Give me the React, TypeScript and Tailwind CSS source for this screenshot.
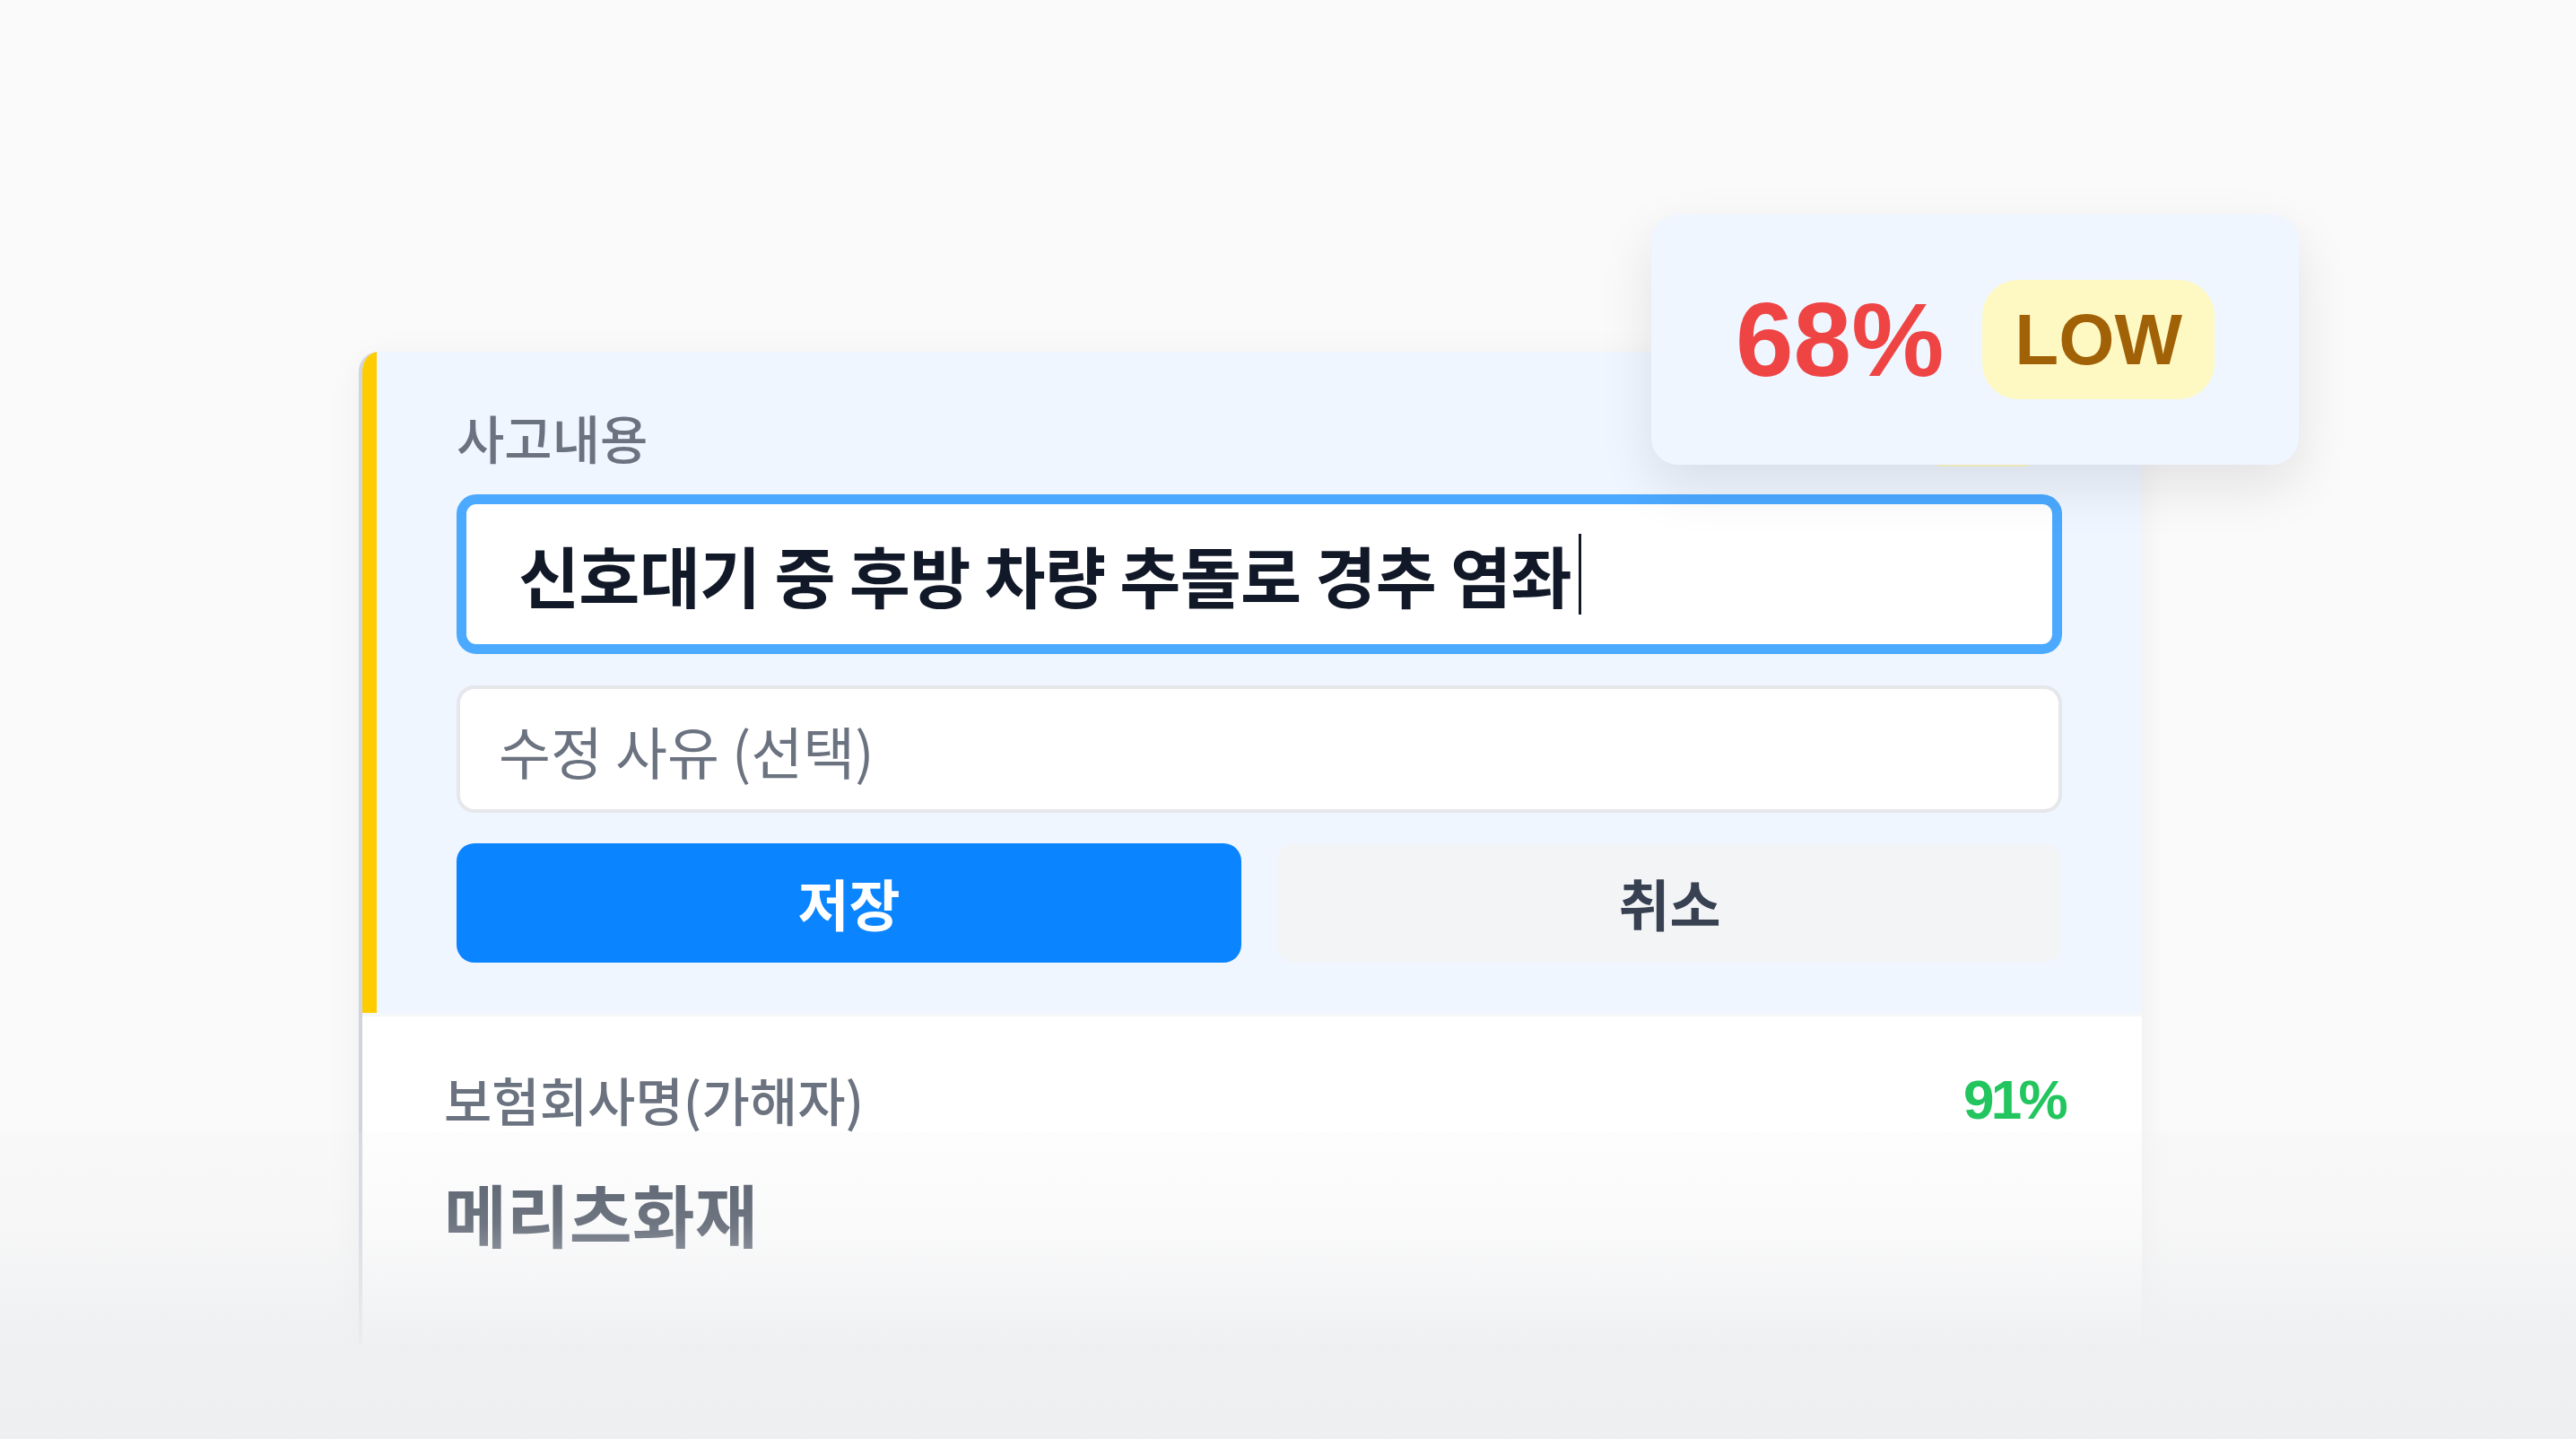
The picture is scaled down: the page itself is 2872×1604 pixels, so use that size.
import React from 'react'

const Caret = () => <span className="ml-[8px] inline-block h-[90px] w-[3px] bg-[#111827]" />

export default function App() {
  return (
    <div className="relative h-[1604px] w-[2872px] overflow-hidden bg-[#fafafa] font-['Noto_Sans_CJK_KR','Noto_Sans',sans-serif]">
      <div className="pl-[400px] pt-[392px]">
        <div className="w-[1988px] overflow-hidden rounded-tl-[22px] border-l-4 border-[#d1d5db] shadow-[0_8px_40px_rgba(15,23,42,0.05)]">
          <section className="rounded-tl-[16px] border-l-[16px] border-[#ffcc00] bg-[#eff6ff] px-[89px] pb-[56px] pt-[62px]">
            <div className="flex h-[66px] items-center justify-between">
              <span className="text-[58px] font-medium leading-none text-[#6b7280]">사고내용</span>
              <span className="mr-[12px] h-[66px] w-[152px] rounded-full bg-[#fef9c3]" />
            </div>
            <div className="mt-[31px] flex h-[178px] items-center rounded-[22px] border-[11px] border-[#4ba9ff] bg-white pl-[58px]">
              <span className="text-[74px] font-bold leading-none tracking-[-0.01em] text-[#111827]">
                신호대기 중 후방 차량 추돌로 경추 염좌
              </span>
              <Caret />
            </div>
            <div className="mt-[35px] flex h-[142px] items-center rounded-[20px] border-4 border-[#e5e7eb] bg-white pl-[43px]">
              <span className="text-[63px] leading-none text-[#6b7280]">수정 사유 (선택)</span>
            </div>
            <div className="mt-[34px] grid h-[133px] grid-cols-2 gap-[40px]">
              <button className="rounded-[20px] bg-[#0a84ff] text-[62px] font-bold text-white">저장</button>
              <button className="rounded-[20px] bg-[#f3f4f6] text-[62px] font-semibold text-[#374151]">취소</button>
            </div>
          </section>

          <section className="h-[369px] border-t-4 border-[#f6f7f9] bg-white pl-[91px] pr-[86px] pt-[56px]">
            <div className="flex items-center justify-between">
              <span className="text-[58px] font-medium leading-[1.2] text-[#6b7280]">보험회사명(가해자)</span>
              <span className="font-['Liberation_Sans',Arial,sans-serif] text-[62px] font-bold leading-[1.2] tracking-[-0.06em] text-[#22c55e]">
                91%
              </span>
            </div>
            <div className="mt-[44px] text-[76px] font-bold leading-[1.2] text-[#374151]">메리츠화재</div>
          </section>
        </div>
      </div>

      {/* floating confidence badge */}
      <div className="absolute left-[1841px] top-[239px] flex h-[279px] w-[722px] items-center justify-center gap-[43px] rounded-[30px] bg-[#eff6ff] shadow-[0_24px_60px_rgba(15,23,42,0.10)]">
        <span className="font-['Liberation_Sans',Arial,sans-serif] text-[116px] font-bold leading-none text-[#ef4444]">68%</span>
        <span className="flex h-[133px] items-center rounded-[40px] bg-[#fef9c3] px-[36px] font-['Liberation_Sans',Arial,sans-serif] text-[80px] font-bold leading-none text-[#a16207]">
          LOW
        </span>
      </div>

      <div className="pointer-events-none absolute inset-x-0 bottom-0 top-[1262px] bg-[linear-gradient(to_bottom,rgba(238,239,241,0.15),rgba(238,239,241,0.3)_30%,rgba(238,239,241,0.92)_70%,#eeeff1)]" />
    </div>
  )
}
